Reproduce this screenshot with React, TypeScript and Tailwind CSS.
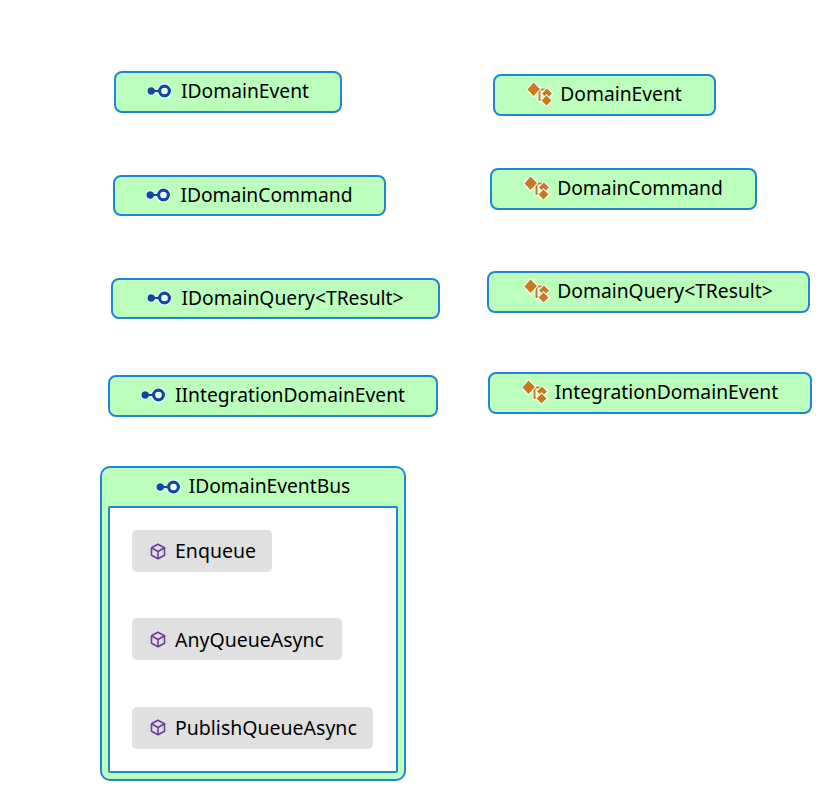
const font = "font-['Noto_Sans','Open_Sans',sans-serif]";

function InterfaceIcon() {
  return (
    <svg width="24" height="16" viewBox="0 0 24 16" className="shrink-0">
      <path d="M4 8h13" stroke="#fff" strokeWidth="4" />
      <circle cx="4.200" cy="8" r="4.600" fill="#fff" />
      <circle cx="17.500" cy="8" r="7.500" fill="#fff" />
      <circle cx="4.200" cy="8" r="3.700" fill="#0b4a9e" />
      <rect x="6" y="6.900" width="7" height="2.200" fill="#0b4a9e" />
      <circle cx="17.500" cy="8" r="4.900" fill="#fff" stroke="#0b4a9e" strokeWidth="3.200" />
    </svg>
  );
}

function ClassIcon() {
  return (
    <svg width="26" height="24" viewBox="0 0 26 24" className="shrink-0">
      <path d="M8 7.500h10M12.500 7.500v10.500h4" fill="none" stroke="#fff" strokeWidth="4" />
      <path d="M8 7.500h10M12.500 7.500v10.500h4" fill="none" stroke="#c47a1e" strokeWidth="2" />
      <path d="M6.500 0.500l6.500 6.500-6.500 7L0.500 7.500z" fill="#c47a1e" stroke="#fff" strokeWidth="2" paintOrder="stroke" />
      <path d="M20 6.500l5 5-5 5-5-5z" fill="#c47a1e" stroke="#fff" strokeWidth="2" paintOrder="stroke" />
      <path d="M19.500 13.500l5 5-5 5-5-5z" fill="#c47a1e" stroke="#fff" strokeWidth="2" paintOrder="stroke" />
    </svg>
  );
}

function MethodIcon() {
  return (
    <svg width="16" height="17" viewBox="0 0 16 17" fill="none" stroke="#6f3ca0" strokeWidth="1.600" strokeLinejoin="round" className="shrink-0">
      <path d="M8 1.200l6.500 3.600v7.400L8 15.800l-6.500-3.600V4.800z" />
      <path d="M1.500 4.800L8 8.500l6.500-3.700M8 8.500v7.300" />
    </svg>
  );
}

function Method({ label, className }: { label: string; className: string }) {
  return (
    <div className={`flex h-[42px] items-center gap-[9px] rounded-[5px] bg-[#e0e0e0] pl-[18px] text-[19.5px] text-black ${className}`}>
      <MethodIcon />
      <span>{label}</span>
    </div>
  );
}

const nodeBase =
  "absolute flex items-center justify-center rounded-[8px] border-2 border-[#1f86d6] bg-[#bcffbc] pb-[2px] text-[19.25px] text-black";

export default function App() {
  return (
    <div className={`relative h-[805px] w-[835px] overflow-hidden bg-white ${font}`}>
      <div className={`${nodeBase} left-[114px] top-[71px] h-[42px] w-[228px] gap-[10px]`}><InterfaceIcon /><span>IDomainEvent</span></div>
      <div className={`${nodeBase} left-[113px] top-[175px] h-[41px] w-[273px] gap-[10px] pt-[1px]`}><InterfaceIcon /><span>IDomainCommand</span></div>
      <div className={`${nodeBase} left-[111px] top-[278px] h-[41px] w-[329px] gap-[10px] pt-[1px]`}><InterfaceIcon /><span>IDomainQuery&lt;TResult&gt;</span></div>
      <div className={`${nodeBase} left-[108px] top-[375px] h-[42px] w-[330px] gap-[10px]`}><InterfaceIcon /><span>IIntegrationDomainEvent</span></div>

      <div className={`${nodeBase} left-[493px] top-[74px] h-[42px] w-[223px] gap-[7px]`}><ClassIcon /><span>DomainEvent</span></div>
      <div className={`${nodeBase} left-[490px] top-[168px] h-[42px] w-[267px] gap-[7px]`}><ClassIcon /><span>DomainCommand</span></div>
      <div className={`${nodeBase} left-[487px] top-[271px] h-[42px] w-[323px] gap-[7px]`}><ClassIcon /><span>DomainQuery&lt;TResult&gt;</span></div>
      <div className={`${nodeBase} left-[488px] top-[372px] h-[42px] w-[324px] gap-[7px]`}><ClassIcon /><span>IntegrationDomainEvent</span></div>

      <div className="absolute left-[100px] top-[466px] flex h-[315px] w-[306px] flex-col rounded-[10px] border-2 border-[#1f86d6] bg-[#bcffbc] px-[6px] pb-[6px] text-[19.25px] text-black">
        <div className="flex h-[38px] shrink-0 items-center justify-center gap-[9px] pb-[1px]"><InterfaceIcon /><span>IDomainEventBus</span></div>
        <div className="flex flex-1 flex-col items-start gap-[46.250px] rounded-[2px] border-2 border-[#1f86d6] bg-white pl-[22px] pt-[22px]">
          <Method label="Enqueue" className="w-[140px]" />
          <Method label="AnyQueueAsync" className="w-[210px]" />
          <Method label="PublishQueueAsync" className="w-[241px]" />
        </div>
      </div>
    </div>
  );
}
